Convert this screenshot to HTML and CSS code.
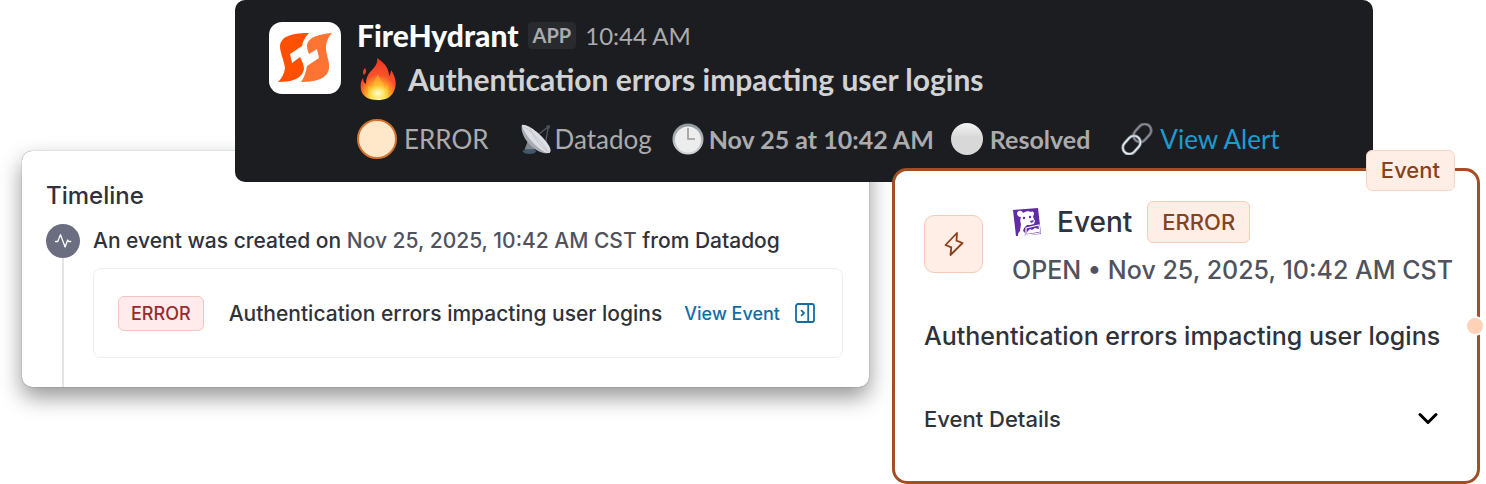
FILE: index.html
```html
<!DOCTYPE html>
<html lang="en">
<head>
    <meta charset="UTF-8">
    <meta name="viewport" content="width=device-width, initial-scale=1.0">
    <title>FireHydrant Event</title>
    <link rel="stylesheet" href="styles.css">
</head>
<body>
    <main class="stage">
        <section class="timeline">
            <h2 class="timeline-title">Timeline</h2>
            <div class="entry">
                <div class="rail">
                    <span class="rail-icon">
                        <svg width="18" height="18" viewBox="0 0 18 18" fill="none" stroke="#fff" stroke-width="1.3" stroke-linecap="round" stroke-linejoin="round">
                            <path d="M1.5 9.500h2.200l2.800-6.800 4.600 12.200 2.600-6.900 1 1.500h2"/>
                        </svg>
                    </span>
                </div>
                <div class="entry-body">
                    <p class="entry-text">An event was created on <time>Nov 25, 2025, 10:42 AM CST</time> from Datadog</p>
                    <div class="event-box">
                        <span class="tag tag-red">ERROR</span>
                        <span class="event-name">Authentication errors impacting user logins</span>
                        <a href="#" class="view-event">View Event
                            <svg width="20" height="20" viewBox="0 0 20 20" fill="none" stroke="currentColor" stroke-width="1.8" stroke-linecap="round" stroke-linejoin="round">
                                <rect x="1" y="1" width="18" height="18" rx="2"/>
                                <path d="M13.2 1v18M6.600 7.600L9 10l-2.400 2.400"/>
                            </svg>
                        </a>
                    </div>
                </div>
            </div>
        </section>

        <section class="slack">
            <svg class="avatar" width="72" height="72" viewBox="0 0 72 72">
                <rect width="72" height="72" rx="13" fill="#fff"/>
                <path d="M40 11C26 11 12 13 11 24c0 7 4 14 5 22-1 6-3 10-7 14 14 0 24-3 26-13 0-4-2-8-4-12l-8 6-2-9 12-8c1-6 4-10 7-13z" fill="#ff4f00"/>
                <path d="M63 11C50 12 39 15 38 23c0 4 1 6 2 9l8-5 2 9-12 8c-1 6-3 12-6 16 14 0 27-3 28-14 1-7-4-15-3-23 1-5 3-9 6-12z" fill="#ff7433"/>
            </svg>
            <div class="message">
                <div class="sender">
                    <strong class="sender-name">FireHydrant</strong>
                    <span class="app-tag">APP</span>
                    <time class="sent-at">10:44 AM</time>
                </div>
                <div class="message-title">
                    <svg class="fire" width="42" height="44" viewBox="0 0 42 44">
                        <defs>
                            <radialGradient id="fire" cx="0.5" cy="0.95" r="0.9">
                                <stop offset="0" stop-color="#fffbd0"/>
                                <stop offset="0.2" stop-color="#ffe94d"/>
                                <stop offset="0.4" stop-color="#ffa126"/>
                                <stop offset="0.62" stop-color="#f8512a"/>
                                <stop offset="1" stop-color="#ee3a24"/>
                            </radialGradient>
                            <radialGradient id="glow">
                                <stop offset="0" stop-color="#fffde0"/>
                                <stop offset="1" stop-color="#ffee60" stop-opacity="0"/>
                            </radialGradient>
                        </defs>
                        <path d="M20 1c8 5 12 11 12 18 1-1 2-3 2-6 5 7 6 15 3 21-3 7-9 9-16 9C12 43 6 40 4 33c-1-5 0-9 2-12 0 3 1 5 3 6 0-5 1-9 6-14 4-4 6-8 5-12z" fill="url(#fire)"/>
                        <path d="M8 11c2 3 1 5-1 7-2-2-1-5 1-7z" fill="#ee3a24"/>
                        <path d="M21 17c1 6 7 9 6 15 2-1 3-3 3-5 4 8 0 15-9 15-8 0-13-7-9-14 1 2 2 3 4 4-1-7 3-10 5-15z" fill="#ffc933" opacity="0.45"/>
                        <ellipse cx="21" cy="36" rx="11" ry="8" fill="url(#glow)"/>
                    </svg>
                    <strong>Authentication errors impacting user logins</strong>
                </div>
                <div class="fields">
                    <span class="field field-level">
                        <span class="level-dot"></span>
                        ERROR
                    </span>
                    <span class="field field-source">
                        <svg width="32" height="32" viewBox="0 0 34 34">
                            <ellipse cx="10" cy="30" rx="7" ry="3" fill="#40586a"/>
                            <path d="M9 17l7 11H5z" fill="#7c858b"/>
                            <path d="M20 12l10-8M27 22l3-18" stroke="#555b62" stroke-width="1.3" fill="none"/>
                            <circle cx="30" cy="4" r="2" fill="#4b5158"/>
                            <path d="M2 2C-1 15 17 34 31 32 33 30 33 27 30 23 24 14 10 2 2 2z" fill="#a8abb2"/>
                            <path d="M2 2c8-1 22 12 28 21 3 5 3 9 0 9C22 31 5 14 2 2z" fill="#dcdee3"/>
                            <path d="M4 4c9 5 20 17 26 27M10 4c3 9 11 20 20 27" stroke="#b9bcc3" stroke-width="0.8" fill="none"/>
                        </svg>
                        Datadog
                    </span>
                    <span class="field field-time">
                        <svg width="32" height="32" viewBox="0 0 32 32">
                            <defs>
                                <linearGradient id="rim" x1="0" y1="0" x2="0" y2="1">
                                    <stop offset="0" stop-color="#8b979f"/>
                                    <stop offset="1" stop-color="#d6d7d8"/>
                                </linearGradient>
                            </defs>
                            <circle cx="16" cy="16" r="15.5" fill="url(#rim)"/>
                            <circle cx="16" cy="16.5" r="13" fill="#ededed"/>
                            <path d="M16 5v11h7" stroke="#999" stroke-width="1.6" fill="none"/>
                        </svg>
                        <strong>Nov 25 at 10:42 AM</strong>
                    </span>
                    <span class="field field-status">
                        <span class="status-dot"></span>
                        <strong>Resolved</strong>
                    </span>
                    <a href="#" class="field view-alert">
                        <svg width="32" height="32" viewBox="0 0 32 32" fill="none">
                            <g transform="rotate(-48 16 16)">
                                <rect x="14" y="9.500" width="20" height="13" rx="6.500" stroke="#65646c" stroke-width="3"/>
                                <rect x="14" y="9.500" width="20" height="13" rx="6.500" stroke="#9899a1" stroke-width="1"/>
                                <rect x="-2" y="9.500" width="20" height="13" rx="6.500" stroke="#8c96a1" stroke-width="3"/>
                                <rect x="-2" y="9.500" width="20" height="13" rx="6.500" stroke="#e9eef3" stroke-width="1.4"/>
                            </g>
                        </svg>
                        View Alert
                    </a>
                </div>
            </div>
        </section>

        <section class="event-card">
            <span class="corner-tag">Event</span>
            <span class="handle"></span>
            <div class="event-head">
                <span class="event-icon">
                    <svg width="20" height="26" viewBox="0 0 20 26" fill="none" stroke="#8a3f16" stroke-width="1.8" stroke-linejoin="round">
                        <path d="M13 2L1.500 14l5.800 2.300L6.500 24 18.500 12l-6-2.300z"/>
                    </svg>
                </span>
                <div class="event-info">
                    <div class="event-line">
                        <svg width="30" height="31" viewBox="0 0 30 31">
                            <path d="M1 3L26 1l3 26-25 2z" fill="#632ca6"/>
                            <path d="M5 6c1-3 5-3 6 0 3-2 6-2 8-1 2-1 3 0 3 2l-1 3 2 4-1 3-4 1-3 0-3 3-1 3c2 1 3 3 1 5l-5 1c-2-2-1-4 1-6L9 17c-1-2-1-5 0-7-3 0-4-2-4-4z" fill="#fff"/>
                            <circle cx="12" cy="11" r="1.200" fill="#632ca6"/>
                            <circle cx="18" cy="10" r="1.200" fill="#632ca6"/>
                            <path d="M18 14l4-1-1 2-2 1z" fill="#632ca6"/>
                            <path d="M14 21l13-3 1 8-14 2z" fill="#632ca6" stroke="#fff" stroke-width="1.200"/>
                            <path d="M15 25l3-3 2 1 3-2 4 1v3l-12 2z" fill="#fff"/>
                        </svg>
                        <h3 class="event-heading">Event</h3>
                        <span class="tag tag-orange">ERROR</span>
                    </div>
                    <p class="event-status">OPEN • Nov 25, 2025, 10:42 AM CST</p>
                </div>
            </div>
            <p class="event-summary">Authentication errors impacting user logins</p>
            <button type="button" class="details-btn">
                Event Details
                <svg width="20" height="14" viewBox="0 0 20 14" fill="none" stroke="#000" stroke-width="3" stroke-linecap="round" stroke-linejoin="round">
                    <path d="M2 2.500l8 8 8-8"/>
                </svg>
            </button>
        </section>
    </main>
</body>
</html>
```
FILE: styles.css
```css
* {
    box-sizing: border-box;
}
body {
    margin: 0;
    background: white;
    font-family: Inter, sans-serif;
    font-weight: 500;
    color: #2f323a;
}
h2, h3, p {
    margin: 0;
    font-weight: 500;
}
svg {
    flex-shrink: 0;
}
a {
    text-decoration: none;
}
/* the three cards share one row and overlap by column span */
.stage {
    display: grid;
    grid-template-columns: 22fr 213fr 634fr 23fr 481fr 107fr 6fr;
    align-items: start;
    white-space: nowrap;
}

/* timeline card */
.timeline {
    grid-area: 1 / 2 / 2 / 4;
    margin-top: 151px;
    padding: 29px 26px 0 24px;
    background: white;
    border-radius: 10px;
    box-shadow: 0 0 1px rgba(0, 0, 0, 0.6), 0 10px 22px rgba(0, 0, 0, 0.42);
}
.timeline-title {
    font-size: 24px;
    line-height: 32px;
}
.entry {
    display: flex;
    gap: 13px;
    padding-top: 12px;
}
.rail {
    width: 34px;
    background: linear-gradient(#e3e4e8, #e3e4e8) center / 2px 100% no-repeat;
}
.rail-icon {
    display: flex;
    align-items: center;
    justify-content: center;
    height: 34px;
    border-radius: 50%;
    background: #6b6e80;
}
.entry-body {
    flex: 1;
    padding-bottom: 29px;
}
.entry-text {
    margin-bottom: 10px;
    font-size: 21px;
    line-height: 34px;
}
.entry-text time {
    color: #50535d;
}
.event-box {
    display: flex;
    align-items: center;
    height: 90px;
    padding: 0 27px 0 24px;
    border: 1px solid #eeeef0;
    border-radius: 8px;
}
.event-name {
    margin-left: 25px;
    font-size: 21px;
}
.tag {
    border: 1px solid;
    border-radius: 6px;
}
.tag-red {
    padding: 0 12px;
    font-size: 18px;
    line-height: 33px;
    color: #992b2e;
    background: #ffebeb;
    border-color: #f2c4c4;
}
.view-event {
    display: flex;
    align-items: center;
    gap: 15px;
    margin-left: auto;
    font-size: 18px;
    color: #116da6;
}

/* slack message */
.slack {
    grid-area: 1 / 3 / 2 / 6;
    z-index: 1;
    display: flex;
    align-items: flex-start;
    gap: 16px;
    padding: 15px 34px 21px;
    border-radius: 10px;
    background: #1c1d21;
    color: #ababad;
    font-family: Lato, sans-serif;
    font-weight: 400;
}
.avatar {
    margin-top: 7px;
}
.sender {
    display: flex;
    align-items: center;
    gap: 9px;
    height: 40px;
}
.sender-name {
    font-size: 30px;
    font-weight: 900;
    color: #fff;
}
.app-tag {
    padding: 0 5px;
    border-radius: 4px;
    background: #282a2e;
    font-size: 20px;
    font-weight: 700;
    line-height: 27px;
}
.sent-at {
    font-size: 24px;
}
.message-title {
    display: flex;
    align-items: center;
    gap: 9px;
    height: 48px;
    font-size: 30px;
    color: #d1d2d3;
}
.fields {
    display: flex;
    align-items: center;
    margin-top: 14px;
    height: 44px;
    font-size: 26px;
}
.field {
    display: flex;
    align-items: center;
    gap: 7px;
}
.field strong {
    font-size: 25px;
}
.field-level, .field-status {
    margin-right: 31px;
}
.field-source {
    gap: 3px;
    margin-right: 20px;
}
.field-time {
    gap: 5px;
    margin-right: 17px;
}
.level-dot {
    width: 40px;
    height: 40px;
    border: 2px solid #d4732e;
    border-radius: 50%;
    background: #ffe8c9;
}
.status-dot {
    width: 32px;
    height: 32px;
    border-radius: 50%;
    background: linear-gradient(#f4f4f4, #d8d8d8 45%);
}
.view-alert {
    color: #1d9bd1;
}

/* event node */
.event-card {
    grid-area: 1 / 5 / 2 / 7;
    position: relative;
    z-index: 2;
    margin-top: 168px;
    padding: 30px 23px 46px 29px;
    border: 3px solid #a14f23;
    border-radius: 15px;
    background: white;
}
.corner-tag {
    position: absolute;
    top: -21px;
    right: 22px;
    padding: 0 14px;
    border: 1px solid #f7d8c8;
    border-radius: 6px;
    background: #ffeee5;
    color: #84441d;
    font-size: 22px;
    line-height: 39px;
}
.handle {
    position: absolute;
    top: 145px;
    right: -8px;
    width: 20px;
    height: 20px;
    border: 2px solid #fff;
    border-radius: 50%;
    background: #ffd1b8;
}
.event-head {
    display: flex;
    align-items: center;
    gap: 29px;
}
.event-icon {
    display: flex;
    flex-shrink: 0;
    align-items: center;
    justify-content: center;
    width: 59px;
    height: 58px;
    border: 1px solid #f5cdb9;
    border-radius: 10px;
    background: #ffeee5;
}
.event-line {
    display: flex;
    align-items: center;
    gap: 15px;
}
.event-heading {
    font-size: 28px;
}
.tag-orange {
    padding: 0 14px;
    font-size: 22px;
    line-height: 40px;
    color: #84441d;
    background: #ffeee5;
    border-color: #f5cdb9;
}
.event-status {
    margin-top: 10px;
    font-size: 25px;
    line-height: 34px;
    color: #50535d;
}
.event-summary {
    margin-top: 32px;
    font-size: 25px;
    line-height: 34px;
}
.details-btn {
    display: flex;
    align-items: center;
    justify-content: space-between;
    width: 100%;
    margin-top: 50px;
    padding: 0 16px 0 0;
    border: none;
    background: none;
    color: inherit;
    font: inherit;
    font-size: 22px;
    line-height: 32px;
    cursor: pointer;
}
```
